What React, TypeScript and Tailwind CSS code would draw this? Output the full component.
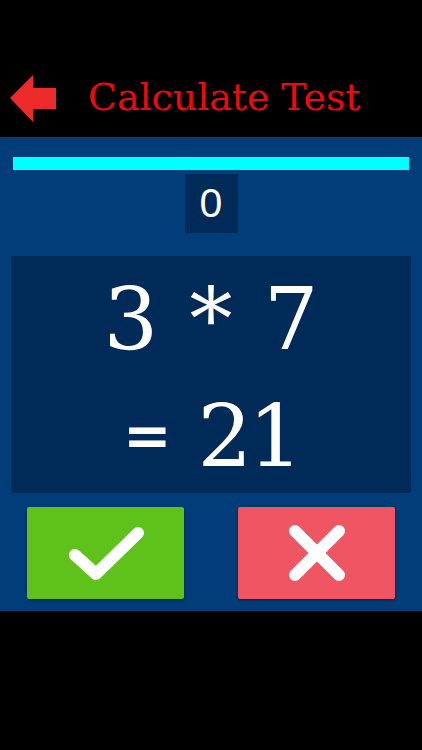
import React from 'react';

const serif = { fontFamily: '"DejaVu Serif", "Liberation Serif", serif' };

const App: React.FC = () => {
  return (
    <div className="w-[422px] h-[750px] bg-black flex flex-col overflow-hidden">
      {/* Header */}
      <div className="h-[137px] pt-[75px]">
        <div className="h-[48px] flex items-center">
          <svg width="48" height="48" viewBox="0 0 48 48" className="ml-[9px] shrink-0">
            <polygon points="1,23 24,0 24,13 47,13 47,34 24,34 24,47" fill="#ec2a2a" />
          </svg>
          <h1 className="ml-[31px] -mt-[4px] text-[38px] leading-none text-[#ee0a0a] tracking-[-0.1px]" style={serif}>
            Calculate Test
          </h1>
        </div>
      </div>

      {/* Panel */}
      <div className="h-[474px] bg-[#003d79] flex flex-col pt-[20px]">
        <div className="mx-[13px] h-[13px] bg-[#00ffff]" />
        <div className="flex justify-center mt-[4px]">
          <div className="w-[53px] h-[59px] bg-[#002a57] flex items-center justify-center text-white text-[41px] font-light" style={{ fontFamily: '"Liberation Sans", Arial, sans-serif' }}>
            0
          </div>
        </div>

        <div className="mx-[11px] mt-[23px] h-[237px] bg-[#002a58] flex flex-col items-center justify-center text-white" style={serif}>
          <div className="text-[86px] leading-[118px] whitespace-pre pt-[4px] tracking-[2px] pl-[2px]">3 * 7</div>
          <div className="h-[118px] flex items-center justify-center">
            <span className="text-[58px] leading-none mr-[26px] font-bold">=</span>
            <span className="text-[86px] leading-none tracking-[-4px]">21</span>
          </div>
        </div>

        <div className="flex justify-between px-[27px] mt-[14px]">
          <button className="w-[157px] h-[92px] bg-[#5ec21a] rounded-[2px] shadow-[0_1px_3px_rgba(0,0,0,0.5)] flex items-center justify-center">
            <svg width="80" height="58" viewBox="0 0 80 58">
              <polyline points="9,31 30,50 72,9" fill="none" stroke="white" strokeWidth="12" strokeLinecap="round" strokeLinejoin="round" />
            </svg>
          </button>
          <button className="w-[157px] h-[92px] bg-[#ef5562] rounded-[2px] shadow-[0_1px_3px_rgba(0,0,0,0.5)] flex items-center justify-center">
            <svg width="58" height="58" viewBox="0 0 58 58">
              <line x1="7" y1="7" x2="51" y2="51" stroke="white" strokeWidth="12" strokeLinecap="round" />
              <line x1="51" y1="7" x2="7" y2="51" stroke="white" strokeWidth="12" strokeLinecap="round" />
            </svg>
          </button>
        </div>
      </div>
    </div>
  );
};

export default App;
